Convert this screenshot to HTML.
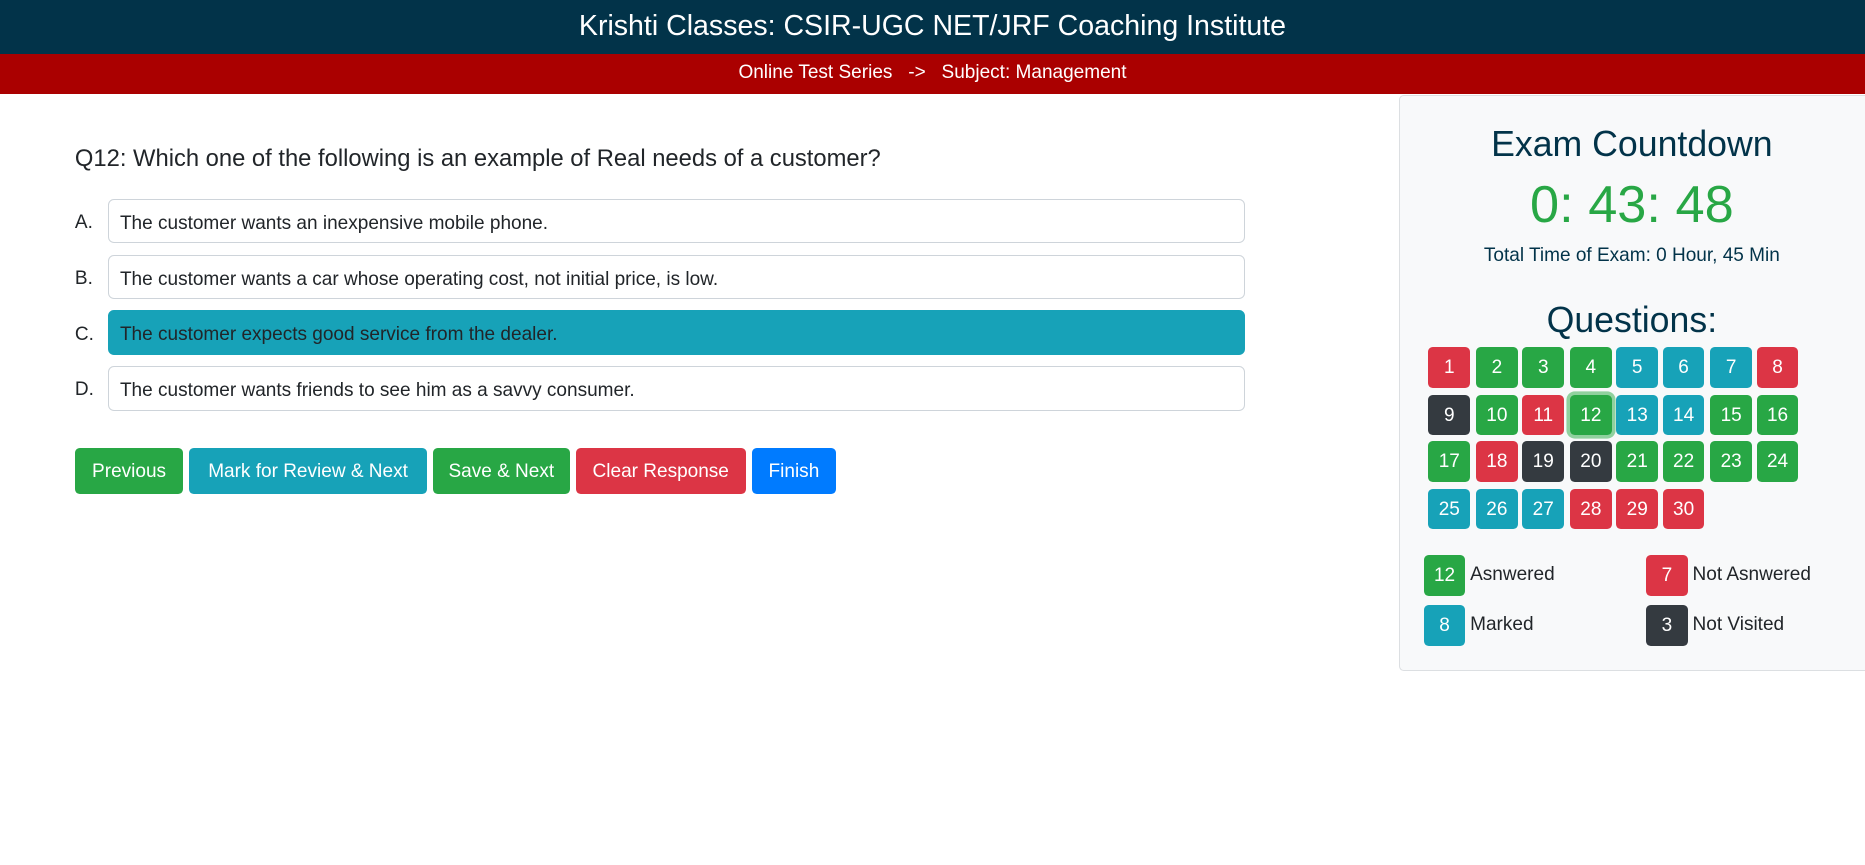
<!DOCTYPE html>
<html><head><meta charset="utf-8"><style>
html,body{margin:0;padding:0}
body{width:1568px;height:727px;zoom:1.18941;font-family:"Liberation Sans",sans-serif;color:#212529;background:#fff;position:relative;overflow:hidden}
.hd{position:absolute;left:0;top:0;width:1568px;height:45px;background:#023349;color:#fff;font-size:24px;text-align:center;line-height:44px}
.sub{position:absolute;left:0;top:45px;width:1568px;height:34px;background:#aa0000;color:#fff;font-size:16px;text-align:center;line-height:32px;white-space:pre}
.q{position:absolute;left:63px;top:122px;font-size:20px}
.lbl{position:absolute;left:63px;font-size:16px}
.opt{position:absolute;left:91px;height:36px;border:1px solid #ced4da;border-radius:5px;font-size:16px;line-height:40px;padding-left:9px;box-sizing:content-box;width:945px}
.opt.sel{background:#17a2b8;border-color:#17a2b8}
.btn{position:absolute;top:377px;height:38px;line-height:41px;color:#fff;font-size:16px;text-align:center;border-radius:4px}
.panel{position:absolute;left:1176px;top:80px;width:400px;height:484px;background:#f8f9fa;border:1px solid #dcdfe2;border-radius:4px;box-sizing:border-box}
.c{position:absolute;left:1176px;width:392px;text-align:center}
.nb{position:absolute;width:35px;height:34px;border-radius:4px;color:#fff;font-size:16px;text-align:center;line-height:36px}
.r{background:#dc3545}.g{background:#28a745}.b{background:#17a2b8}.d{background:#343a40}
.lg{position:absolute;font-size:16px}
</style></head><body>
<div class="hd">Krishti Classes: CSIR-UGC NET/JRF Coaching Institute</div>
<div class="sub">Online Test Series   -&gt;   Subject: Management</div>
<div class="q">Q12: Which one of the following is an example of Real needs of a customer?</div>
<div class="lbl" style="top:178px">A.</div>
<div class="lbl" style="top:225px">B.</div>
<div class="lbl" style="top:272px">C.</div>
<div class="lbl" style="top:319px">D.</div>
<div class="opt" style="top:167px">The customer wants an inexpensive mobile phone.</div>
<div class="opt" style="top:214px">The customer wants a car whose operating cost, not initial price, is low.</div>
<div class="opt sel" style="top:261px">The customer expects good service from the dealer.</div>
<div class="opt" style="top:308px">The customer wants friends to see him as a savvy consumer.</div>
<div class="btn g" style="left:63px;width:91px">Previous</div>
<div class="btn b" style="left:159px;width:200px">Mark for Review &amp; Next</div>
<div class="btn g" style="left:364px;width:115px">Save &amp; Next</div>
<div class="btn r" style="left:484px;width:143px">Clear Response</div>
<div class="btn" style="left:632px;width:71px;background:#007bff">Finish</div>
<div class="panel"></div>
<div class="c" style="top:104px;font-size:30px;color:#023349">Exam Countdown</div>
<div class="c" style="top:147px;font-size:44px;color:#28a745">0: 43: 48</div>
<div class="c" style="top:206px;font-size:16px;color:#023349">Total Time of Exam: 0 Hour, 45 Min</div>
<div class="c" style="top:252px;font-size:30px;color:#023349">Questions:</div>
<div class="nb r" style="left:1201px;top:292px">1</div><div class="nb g" style="left:1241px;top:292px">2</div><div class="nb g" style="left:1280px;top:292px">3</div><div class="nb g" style="left:1320px;top:292px">4</div><div class="nb b" style="left:1359px;top:292px">5</div><div class="nb b" style="left:1398px;top:292px">6</div><div class="nb b" style="left:1438px;top:292px">7</div><div class="nb r" style="left:1477px;top:292px">8</div>
<div class="nb d" style="left:1201px;top:332px">9</div><div class="nb g" style="left:1241px;top:332px">10</div><div class="nb r" style="left:1280px;top:332px">11</div><div class="nb g" style="left:1320px;top:332px;box-shadow:0 0 0 3px #8fd19e">12</div><div class="nb b" style="left:1359px;top:332px">13</div><div class="nb b" style="left:1398px;top:332px">14</div><div class="nb g" style="left:1438px;top:332px">15</div><div class="nb g" style="left:1477px;top:332px">16</div>
<div class="nb g" style="left:1201px;top:371px">17</div><div class="nb r" style="left:1241px;top:371px">18</div><div class="nb d" style="left:1280px;top:371px">19</div><div class="nb d" style="left:1320px;top:371px">20</div><div class="nb g" style="left:1359px;top:371px">21</div><div class="nb g" style="left:1398px;top:371px">22</div><div class="nb g" style="left:1438px;top:371px">23</div><div class="nb g" style="left:1477px;top:371px">24</div>
<div class="nb b" style="left:1201px;top:411px">25</div><div class="nb b" style="left:1241px;top:411px">26</div><div class="nb b" style="left:1280px;top:411px">27</div><div class="nb r" style="left:1320px;top:411px">28</div><div class="nb r" style="left:1359px;top:411px">29</div><div class="nb r" style="left:1398px;top:411px">30</div>
<div class="nb g" style="left:1197px;top:467px">12</div><div class="lg" style="left:1236px;top:474px">Asnwered</div>
<div class="nb r" style="left:1384px;top:467px">7</div><div class="lg" style="left:1423px;top:474px">Not Asnwered</div>
<div class="nb b" style="left:1197px;top:509px">8</div><div class="lg" style="left:1236px;top:516px">Marked</div>
<div class="nb d" style="left:1384px;top:509px">3</div><div class="lg" style="left:1423px;top:516px">Not Visited</div>
</body></html>
